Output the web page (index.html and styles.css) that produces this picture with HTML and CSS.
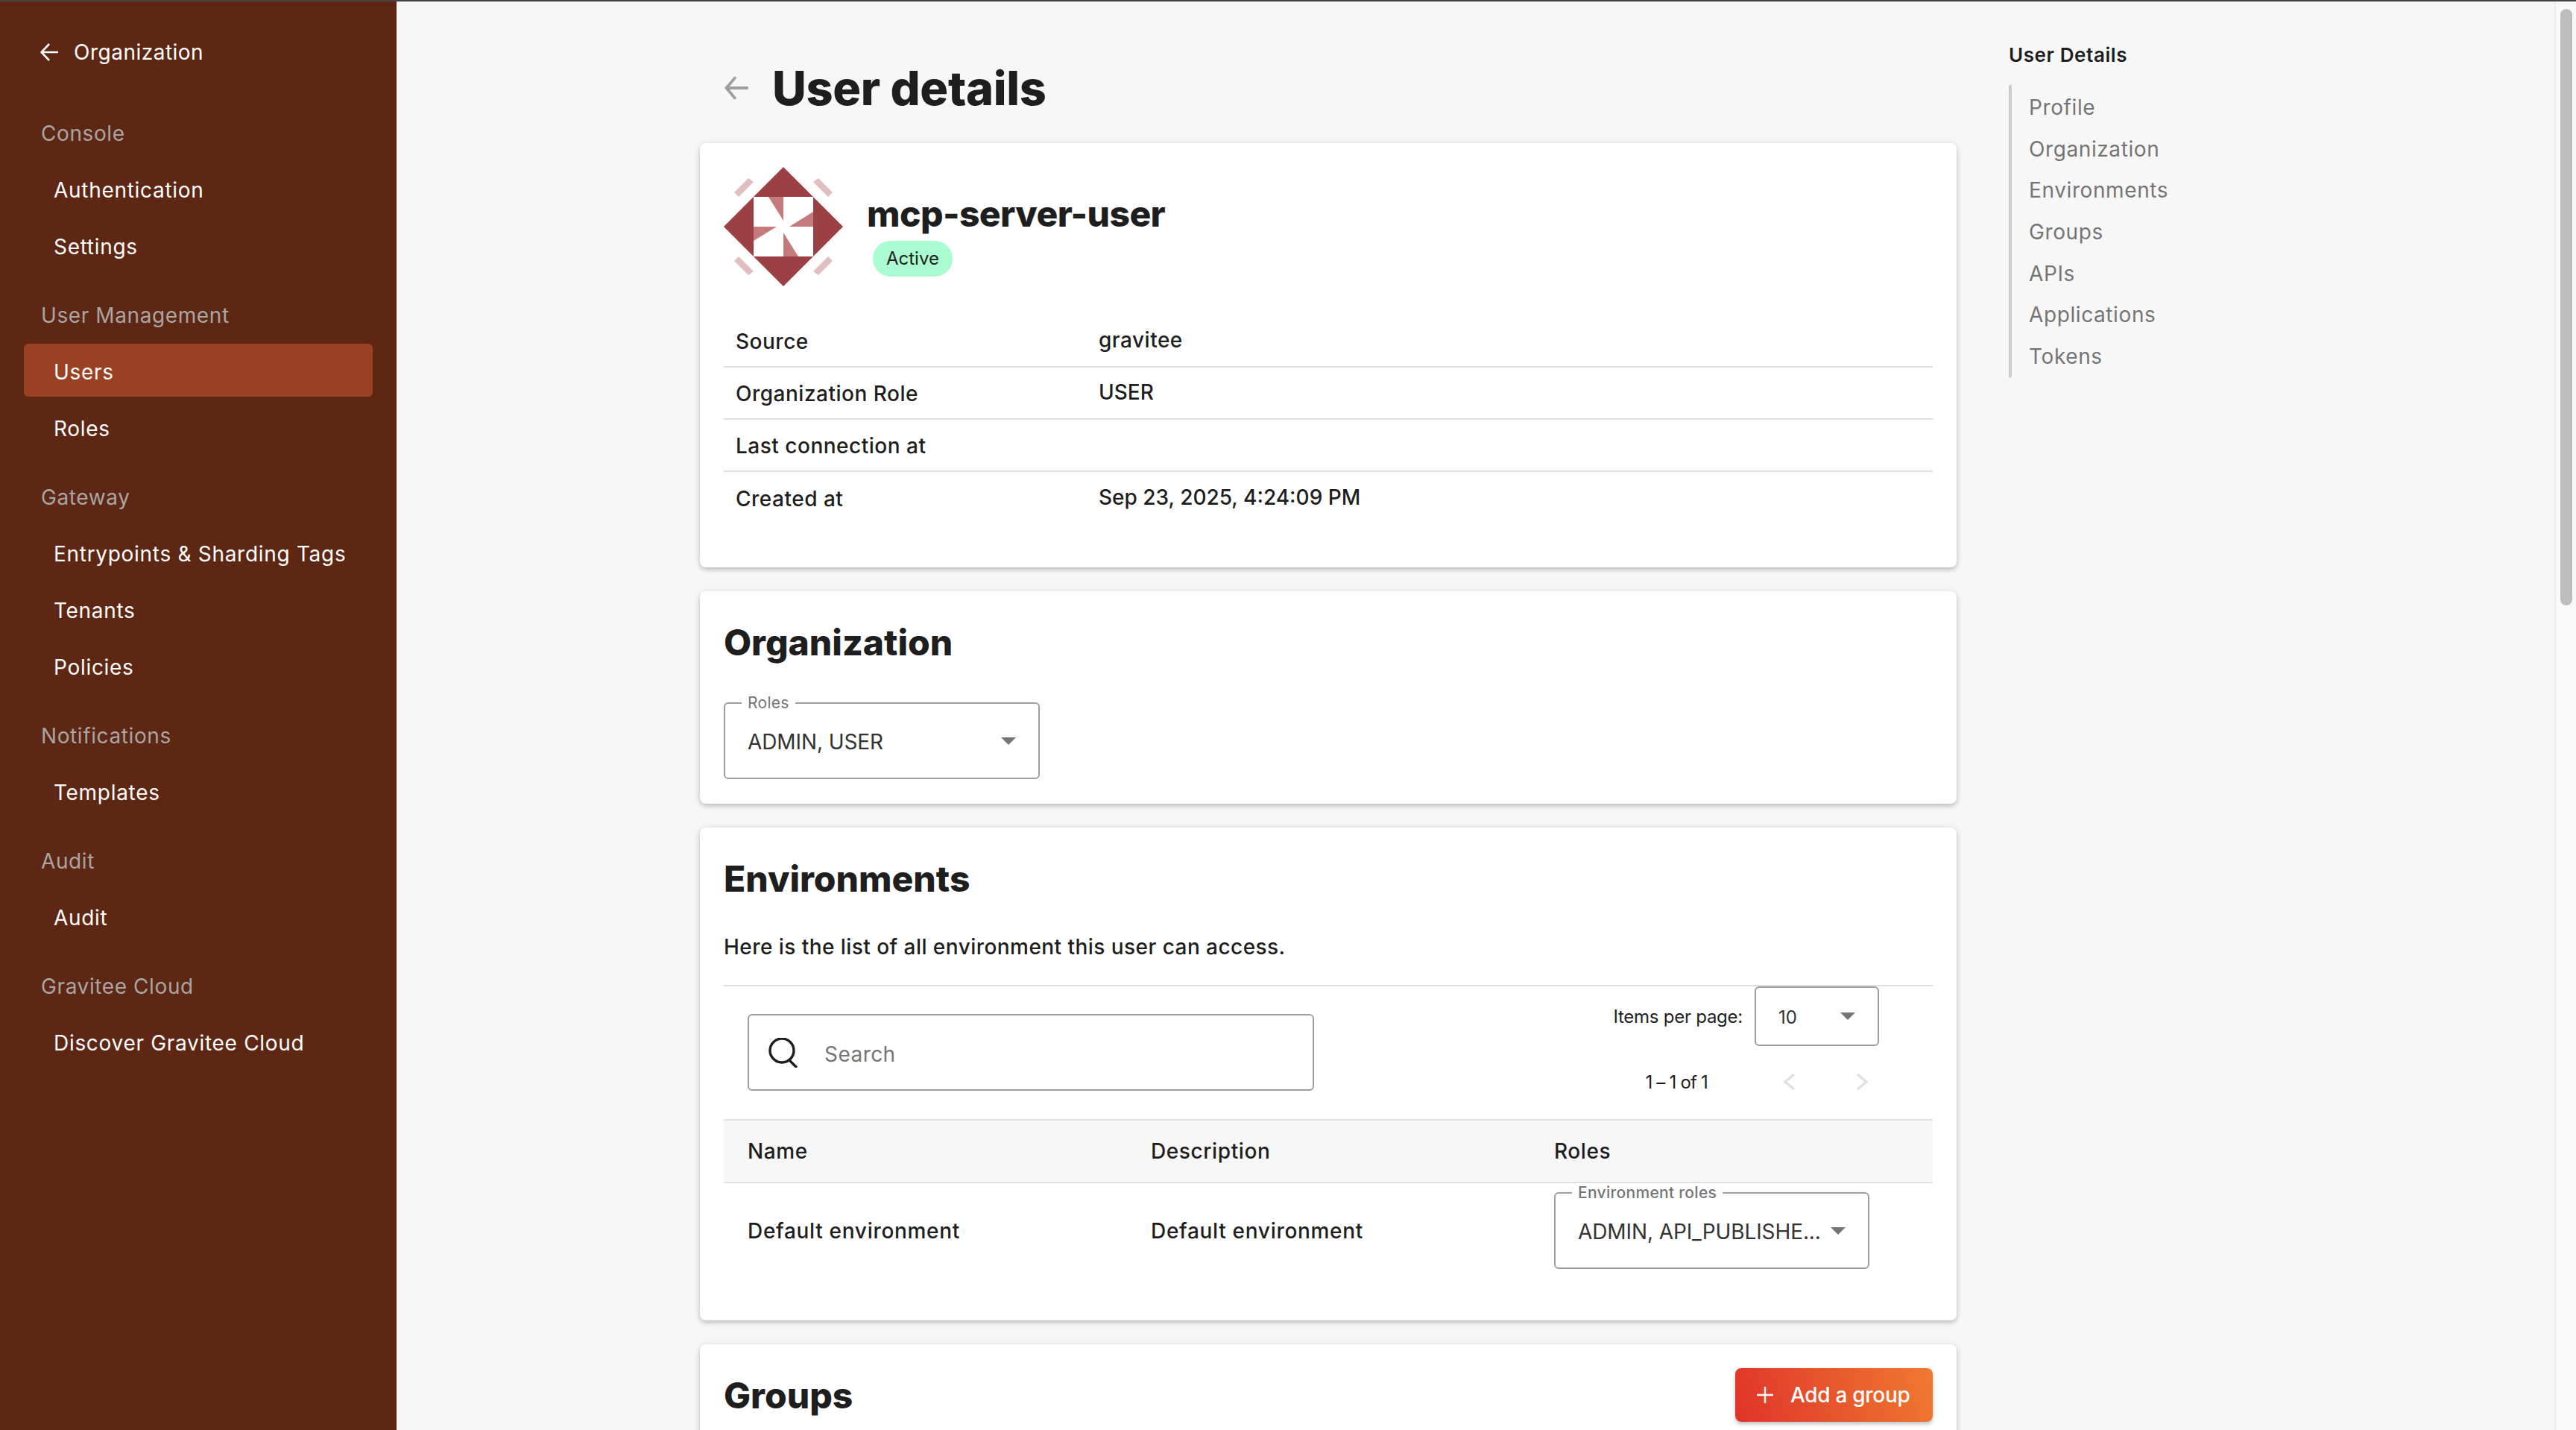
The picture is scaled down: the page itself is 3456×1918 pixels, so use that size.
FILE: index.html
```html
<!DOCTYPE html>
<html lang="en">
<head>
  <meta charset="UTF-8">
  <title>User details</title>
  <link rel="stylesheet" href="styles.css">
</head>
<body>
  <div class="app">
    <nav class="sidebar">
      <a class="back-link">
        <svg class="back-icon" viewBox="0 0 24 24"><path d="M24 12H2M12 1L1.500 12 12 23"/></svg>
        Organization
      </a>
      <div class="nav-group">
        <h3>Console</h3>
        <a class="nav-item">Authentication</a>
        <a class="nav-item">Settings</a>
      </div>
      <div class="nav-group">
        <h3>User Management</h3>
        <a class="nav-item active">Users</a>
        <a class="nav-item">Roles</a>
      </div>
      <div class="nav-group">
        <h3>Gateway</h3>
        <a class="nav-item">Entrypoints &amp; Sharding Tags</a>
        <a class="nav-item">Tenants</a>
        <a class="nav-item">Policies</a>
      </div>
      <div class="nav-group">
        <h3>Notifications</h3>
        <a class="nav-item">Templates</a>
      </div>
      <div class="nav-group">
        <h3>Audit</h3>
        <a class="nav-item">Audit</a>
      </div>
      <div class="nav-group">
        <h3>Gravitee Cloud</h3>
        <a class="nav-item">Discover Gravitee Cloud</a>
      </div>
    </nav>

    <main class="content">
      <div class="page">
        <header class="page-head">
          <svg class="page-back" viewBox="0 0 32 32"><path d="M30 16H4M15 3L4 16l11 13"/></svg>
          <h1>User details</h1>
        </header>

        <section class="card profile">
          <div class="profile-head">
            <svg class="avatar" viewBox="0 0 160 160">
              <path class="av-dark" d="M80 0L160 80 80 160 0 80z"/>
              <path class="av-white" d="M40 40h80v80H40z"/>
              <path class="av-mid" d="M60 40h20v32zM120 60v20H88zM40 80h31L40 99zM80 88l20 32H80z"/>
              <path class="av-dash" d="M33 15l7 5-20 20-6-6zM127 15l-7 5 20 20 6-6zM33 145l7-5-20-20-6 6zM127 145l-7-5 20-20 6 6z"/>
            </svg>
            <div class="profile-text">
              <div class="profile-name">mcp-server-user</div>
              <span class="badge">Active</span>
            </div>
          </div>
          <table class="info">
            <tr><td>Source</td><td class="wide">gravitee</td></tr>
            <tr><td>Organization Role</td><td>USER</td></tr>
            <tr><td>Last connection at</td><td></td></tr>
            <tr><td>Created at</td><td>Sep 23, 2025, 4:24:09 PM</td></tr>
          </table>
        </section>

        <section class="card org">
          <h2>Organization</h2>
          <div class="select org-select">
            <span class="float-label">Roles</span>
            <span class="select-value">ADMIN, USER</span>
            <i class="caret"></i>
          </div>
        </section>

        <section class="card env">
          <h2>Environments</h2>
          <p class="env-text">Here is the list of all environment this user can access.</p>
          <div class="toolbar">
            <div class="search">
              <svg class="search-icon" viewBox="0 0 40 40"><circle cx="18" cy="17" r="16"/><path d="M28 30l10 10"/></svg>
              <span class="search-text">Search</span>
            </div>
            <div class="paginator">
              <div class="page-size">
                <span>Items per page:</span>
                <div class="select size-select">
                  <span class="select-value">10</span>
                  <i class="caret"></i>
                </div>
              </div>
              <div class="page-range">
                <span class="range-text">1 – 1 of 1</span>
                <svg class="chev" viewBox="0 0 20 24"><path d="M16 2L4 12l12 10"/></svg>
                <svg class="chev" viewBox="0 0 20 24"><path d="M4 2l12 10L4 22"/></svg>
              </div>
            </div>
          </div>
          <div class="env-table">
            <div class="env-row env-header">
              <span>Name</span><span>Description</span><span>Roles</span>
            </div>
            <div class="env-row">
              <span>Default environment</span>
              <span>Default environment</span>
              <div class="select role-select">
                <span class="float-label">Environment roles</span>
                <span class="select-value">ADMIN, API_PUBLISHE...</span>
                <i class="caret"></i>
              </div>
            </div>
          </div>
        </section>

        <section class="card groups">
          <h2>Groups</h2>
          <button class="add-btn">
            <svg viewBox="0 0 24 24"><path d="M12 1v22M1 12h22"/></svg>
            Add a group
          </button>
        </section>
      </div>

      <aside class="toc">
        <h4>User Details</h4>
        <ul>
          <li>Profile</li>
          <li>Organization</li>
          <li>Environments</li>
          <li>Groups</li>
          <li>APIs</li>
          <li>Applications</li>
          <li>Tokens</li>
        </ul>
      </aside>
    </main>

    <div class="scrollbar"><div class="thumb"></div></div>
  </div>
</body>
</html>
```

FILE: styles.css
```css
* {
  box-sizing: border-box;
  margin: 0;
  padding: 0;
}

html, body {
  height: 100%;
  overflow: hidden;
}

body {
  background: #f7f7f7;
  color: #1e1e1e;
  font-family: Inter, "Noto Sans", sans-serif;
  font-size: 28px;
  letter-spacing: 0.45px;
  border-top: 2px solid #444;
}

.app {
  display: flex;
  height: 1916px;
  overflow: hidden;
}

/* sidebar */
.sidebar {
  width: 532px;
  flex: none;
  background: #5d2713;
  color: #fff;
  padding: 34px 32px 0;
}

.back-link {
  display: flex;
  align-items: center;
  gap: 21px;
  height: 68px;
  margin: 0 0 34px 22px;
  font-weight: 400;
  letter-spacing: 0.5px;
}

.back-icon {
  width: 24px;
  height: 24px;
  fill: none;
  stroke: #fff;
  stroke-width: 2.6;
}

.nav-group {
  margin-top: 18px;
}

.nav-group h3 {
  display: flex;
  align-items: center;
  height: 79px;
  padding: 2px 0 0 23px;
  font-size: 28px;
  font-weight: 400;
  letter-spacing: 0.6px;
  color: #a9a5a3;
}

.nav-item {
  display: flex;
  align-items: center;
  height: 71px;
  margin-bottom: 5px;
  padding: 4px 0 0 40px;
  border-radius: 6px;
  font-weight: 400;
  letter-spacing: 0.7px;
}

.nav-item.active {
  background: #9b4123;
}

/* main */
.content {
  flex: 1;
  display: flex;
  padding-left: 407px;
  overflow: hidden;
}

.page {
  width: 1686px;
  flex: none;
}

.page-head {
  display: flex;
  align-items: center;
  height: 190px;
  padding: 42px 0 0 31px;
  gap: 30px;
}

.page-back {
  width: 36px;
  height: 36px;
  fill: none;
  stroke: #9e9e9e;
  stroke-width: 3.4;
}

h1 {
  font-size: 63px;
  font-weight: 800;
  letter-spacing: -0.3px;
}

.card {
  background: #fff;
  border-radius: 8px;
  padding: 32px;
  margin-bottom: 32px;
  box-shadow: 0 3px 6px rgba(0,0,0,0.22), 0 0 12px rgba(0,0,0,0.06);
}

h2 {
  margin-top: 7px;
  font-size: 48px;
  font-weight: 800;
  letter-spacing: 0;
}

.profile {
  height: 569px;
}

.profile-head {
  display: flex;
  align-items: center;
  gap: 32px;
}

.avatar {
  width: 160px;
  height: 160px;
  flex: none;
}

.av-dark { fill: #9b4044; }
.av-white { fill: #fff; }
.av-mid { fill: #c57a7c; }
.av-dash { fill: #e3bec0; }

.profile-text {
  padding-top: 18px;
}

.profile-name {
  margin-top: 2px;
  font-size: 48px;
  font-weight: 800;
  line-height: 60px;
  letter-spacing: -0.6px;
}

.badge {
  display: inline-block;
  margin: 6px 0 0 8px;
  padding: 0 18px;
  height: 48px;
  line-height: 48px;
  border-radius: 24px;
  background: #a9fdd0;
  font-size: 24px;
  font-weight: 400;
  letter-spacing: 0;
}

.info {
  width: 100%;
  border-collapse: collapse;
  margin-top: 38px;
  font-weight: 500;
}

.info td {
  height: 70px;
  border-bottom: 2px solid #e0e0e0;
  padding: 0 0 2px 16px;
  letter-spacing: 0;
}

.info td:first-child {
  width: 487px;
  padding: 2px 0 0 16px;
  letter-spacing: 0.5px;
}

.info td.wide {
  letter-spacing: 0.5px;
}

.info tr:last-child td {
  border-bottom: none;
}

/* outlined selects */
.select {
  position: relative;
  display: flex;
  align-items: center;
  justify-content: space-between;
  height: 103px;
  padding: 0 30px;
  border: 2px solid #9e9e9e;
  border-radius: 6px;
  background: #fff;
}

.select-value {
  padding-top: 2px;
  white-space: nowrap;
  font-weight: 400;
  letter-spacing: -0.1px;
  color: #333;
}

.caret {
  flex: none;
  width: 0;
  height: 0;
  border-left: 10px solid transparent;
  border-right: 10px solid transparent;
  border-top: 10px solid #757575;
}

.float-label {
  position: absolute;
  top: -13px;
  left: 22px;
  padding: 0 8px;
  background: #fff;
  font-size: 21px;
  line-height: 24px;
  letter-spacing: 0.3px;
  color: #757575;
}

.org {
  height: 285px;
}

.org-select {
  width: 424px;
  margin-top: 51px;
}

.env {
  height: 661px;
}

.env-text {
  margin-top: 45px;
  font-weight: 500;
}

.toolbar {
  display: flex;
  justify-content: space-between;
  height: 180px;
  margin-top: 34px;
  border-top: 2px solid #e0e0e0;
  padding-left: 32px;
}

.search {
  display: flex;
  align-items: center;
  gap: 35px;
  width: 760px;
  height: 103px;
  margin-top: 37px;
  padding: 0 26px;
  border: 2px solid #9e9e9e;
  border-radius: 6px;
  color: #757575;
}

.search-icon {
  width: 40px;
  height: 40px;
  fill: none;
  stroke: #1e1e1e;
  stroke-width: 3.4;
}

.search-text {
  padding-top: 5px;
}

.paginator {
  display: flex;
  flex-direction: column;
  align-items: flex-end;
  padding-right: 72px;
  font-size: 24px;
  letter-spacing: -0.25px;
}

.page-size {
  display: flex;
  align-items: center;
  gap: 16px;
}

.size-select {
  width: 167px;
  height: 80px;
}

.page-range {
  display: flex;
  align-items: center;
  height: 96px;
}

.range-text {
  margin-right: 100px;
  letter-spacing: -0.8px;
}

.chev {
  width: 20px;
  height: 24px;
  fill: none;
  stroke: #e0e0e0;
  stroke-width: 3.4;
}

.chev + .chev {
  margin-left: 77px;
  margin-right: 13px;
}

.env-row {
  display: grid;
  grid-template-columns: 541px 541px 1fr;
  align-items: center;
  padding: 0 84px 0 32px;
}

.env-header {
  height: 86px;
  background: #f7f7f7;
  border-top: 2px solid #e0e0e0;
  border-bottom: 2px solid #e0e0e0;
  font-weight: 500;
  letter-spacing: 0.6px;
}

.env-row + .env-row {
  padding-top: 12px;
  font-weight: 500;
  letter-spacing: 0.7px;
}

.role-select {
  width: 423px;
}

.groups {
  display: flex;
  align-items: flex-start;
  justify-content: space-between;
  height: 400px;
}

.add-btn {
  display: flex;
  align-items: center;
  gap: 22px;
  width: 265px;
  height: 72px;
  padding-left: 28px;
  border: none;
  border-radius: 8px;
  background: linear-gradient(70deg, #df3329, #ef7a30);
  color: #fff;
  font: 500 28px Inter, "Noto Sans", sans-serif;
  letter-spacing: -0.3px;
  box-shadow: 0 3px 5px rgba(0,0,0,0.25);
  white-space: nowrap;
}

.add-btn svg {
  width: 24px;
  height: 24px;
  fill: none;
  stroke: #fff;
  stroke-width: 2.4;
}

/* right toc */
.toc {
  margin-left: 70px;
  padding-top: 54px;
}

.toc h4 {
  font-size: 26px;
  font-weight: 600;
  line-height: 36px;
  letter-spacing: 0.6px;
}

.toc ul {
  list-style: none;
  margin-top: 22px;
  border-left: 4px solid #ccc;
  padding: 2px 0 0 23px;
}

.toc li {
  height: 55.7px;
  line-height: 56px;
  letter-spacing: 0.6px;
  color: #757575;
}

.scrollbar {
  position: fixed;
  top: 2px;
  right: 0;
  bottom: 0;
  width: 29px;
  background: #f9f9f9;
  border-left: 2px solid #eee;
  padding: 10px 5px 0 6px;
}

.thumb {
  height: 800px;
  border-radius: 9px;
  background: #bdbdbd;
}
```
